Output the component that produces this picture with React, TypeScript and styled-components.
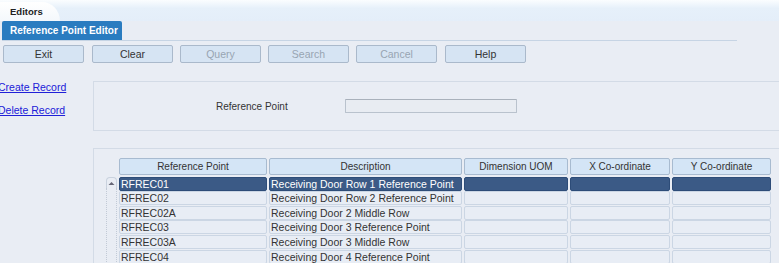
import { Fragment } from "react";
import styled, { createGlobalStyle } from "styled-components";

const GlobalStyle = createGlobalStyle`
    html, body { margin: 0; padding: 0; }
    body {
        background: #e9edf4;
        font-family: "Liberation Sans", Arial, sans-serif;
        font-size: 10px;
        color: #333;
        overflow: hidden;
    }
`;

type Row = { code: string; desc: string };

const rows: Row[] = [
    { code: "RFREC01", desc: "Receiving Door Row 1 Reference Point" },
    { code: "RFREC02", desc: "Receiving Door Row 2 Reference Point" },
    { code: "RFREC02A", desc: "Receiving Door 2 Middle Row" },
    { code: "RFREC03", desc: "Receiving Door 3 Reference Point" },
    { code: "RFREC03A", desc: "Receiving Door 3 Middle Row" },
    { code: "RFREC04", desc: "Receiving Door 4 Reference Point" },
];

const columns = ["Reference Point", "Description", "Dimension UOM", "X Co-ordinate", "Y Co-ordinate"];

const buttons = [
    { label: "Exit", disabled: false },
    { label: "Clear", disabled: false },
    { label: "Query", disabled: true },
    { label: "Search", disabled: true },
    { label: "Cancel", disabled: true },
    { label: "Help", disabled: false },
];

export default function App() {
    return (
        <Page>
            <GlobalStyle />
            <TopBar>
                <EditorsTab>Editors</EditorsTab>
            </TopBar>
            <TabRow>
                <ActiveTab>Reference Point Editor</ActiveTab>
            </TabRow>
            <Rule />
            <Toolbar>
                {buttons.map((b) => (
                    <ToolButton key={b.label} $disabled={b.disabled}>{b.label}</ToolButton>
                ))}
            </Toolbar>

            <Content>
                <Sidebar>
                    <ActionLink href="#">Create Record</ActionLink>
                    <ActionLink href="#">Delete Record</ActionLink>
                </Sidebar>
                <Main>
                    <SearchPanel>
                        <FieldLabel>Reference Point</FieldLabel>
                        <TextInput />
                    </SearchPanel>

                    <GridPanel>
                        <Scroller>
                            <ScrollArrow>
                                <svg width="7" height="5" viewBox="0 0 7 5">
                                    <path d="M0.5 4 L3.5 1 L6.5 4 Z" fill="#667" />
                                </svg>
                            </ScrollArrow>
                            <ScrollTrack />
                        </Scroller>
                        <Grid>
                            {columns.map((c) => (
                                <HeaderCell key={c}>{c}</HeaderCell>
                            ))}
                            {rows.map((r, i) => (
                                <Fragment key={r.code}>
                                    <Cell $selected={i === 0}>{r.code}</Cell>
                                    <Cell $selected={i === 0}>{r.desc}</Cell>
                                    <Cell $selected={i === 0} />
                                    <Cell $selected={i === 0} />
                                    <Cell $selected={i === 0} />
                                </Fragment>
                            ))}
                        </Grid>
                    </GridPanel>
                </Main>
            </Content>
        </Page>
    );
}

const Page = styled.div`
    width: 779px;
    height: 263px;
    overflow: hidden;
`;

const TopBar = styled.div`
    height: 21px;
    background: linear-gradient(#fbfdff 0%, #e6f0fa 40%, #e4eef9 100%);
    display: flex;
    align-items: flex-end;
`;

const EditorsTab = styled.div`
    width: 50px;
    height: 19px;
    padding-left: 10px;
    line-height: 19px;
    background: linear-gradient(#ffffff, #f4f8fc);
    border-top-right-radius: 18px 19px;
    font-size: 9.5px;
    font-weight: bold;
    color: #222;
`;

const TabRow = styled.div`
    height: 19px;
    padding-left: 2px;
    display: flex;
`;

const ActiveTab = styled.div`
    width: 120px;
    height: 19px;
    box-sizing: border-box;
    padding-left: 8px;
    line-height: 19px;
    background: #2a7cc0;
    border-top-left-radius: 2px;
    border-top-right-radius: 2px;
    color: #fff;
    font-size: 10px;
    font-weight: bold;
    white-space: nowrap;
`;

const Rule = styled.div`
    margin-left: 2px;
    width: 735px;
    height: 1px;
    background: #c6d4e4;
`;

const Toolbar = styled.div`
    display: flex;
    gap: 7px;
    padding: 4px 0 0 3px;
`;

const ToolButton = styled.div<{ $disabled: boolean }>`
    width: 81px;
    height: 18px;
    box-sizing: border-box;
    border: 1px solid #aab9cb;
    border-radius: 2px;
    background: #d6e4f3;
    text-align: center;
    line-height: 16px;
    font-size: 10.5px;
    color: ${(p) => (p.$disabled ? "#98a4b2" : "#333")};
    &:nth-child(2), &:nth-child(6) { margin-left: 1px; }
`;

const Content = styled.div`
    display: flex;
    margin-top: 18px;
`;

const Sidebar = styled.div`
    width: 93px;
    flex: none;
    display: flex;
    flex-direction: column;
    gap: 10px;
    margin-left: -2px;
`;

const ActionLink = styled.a`
    color: #2020d8;
    text-decoration: underline;
    font-size: 10.5px;
    line-height: 13px;
`;

const Main = styled.div`
    flex: 1;
    display: flex;
    flex-direction: column;
    gap: 17px;
    margin-left: 2px;
`;

const SearchPanel = styled.div`
    height: 48px;
    border: 1px solid #d3dbe6;
    border-right: none;
    display: flex;
    align-items: center;
    padding-left: 122px;
`;

const FieldLabel = styled.div`
    width: 129px;
    font-size: 10px;
    color: #333;
`;

const TextInput = styled.div`
    width: 172px;
    height: 14px;
    box-sizing: border-box;
    border: 1px solid #b9c2cd;
    border-top-color: #a9b1bb;
    border-radius: 1px;
    background: #e8ecf2;
`;

const GridPanel = styled.div`
    height: 200px;
    border: 1px solid #d3dbe6;
    border-right: none;
    display: flex;
    padding: 9px 0 0 10px;
`;

const Scroller = styled.div`
    width: 15px;
    flex: none;
    margin-top: 19px;
    display: flex;
    flex-direction: column;
    align-items: center;
`;

const ScrollArrow = styled.div`
    width: 9px;
    height: 10px;
    border: 1px solid #c9d2de;
    border-bottom: none;
    border-radius: 4px 4px 0 0;
    display: flex;
    justify-content: center;
    align-items: center;
`;

const ScrollTrack = styled.div`
    width: 9px;
    flex: 1;
    border-left: 1px dotted #c2cad6;
    border-right: 1px dotted #c2cad6;
`;

const Grid = styled.div`
    display: grid;
    grid-template-columns: 148px 193px 104px 100px 99px;
    grid-template-rows: 18px repeat(6, 14.6px);
    column-gap: 2px;
    align-content: start;
`;

const HeaderCell = styled.div`
    height: 17px;
    box-sizing: border-box;
    border: 1px solid #a8bbd0;
    border-radius: 2px;
    background: #d4e5f6;
    text-align: center;
    line-height: 15px;
    font-size: 10px;
    color: #333;
`;

const Cell = styled.div<{ $selected: boolean }>`
    box-sizing: border-box;
    height: 14px;
    margin-top: 0.6px;
    border: 1px solid ${(p) => (p.$selected ? "#2d4c78" : "#cbd6e4")};
    border-radius: 2px;
    background: ${(p) => (p.$selected ? "#3b5a86" : "#e8edf5")};
    color: ${(p) => (p.$selected ? "#fff" : "#333")};
    padding-left: 1px;
    line-height: 12px;
    font-size: 10.5px;
    white-space: nowrap;
    overflow: hidden;
`;
